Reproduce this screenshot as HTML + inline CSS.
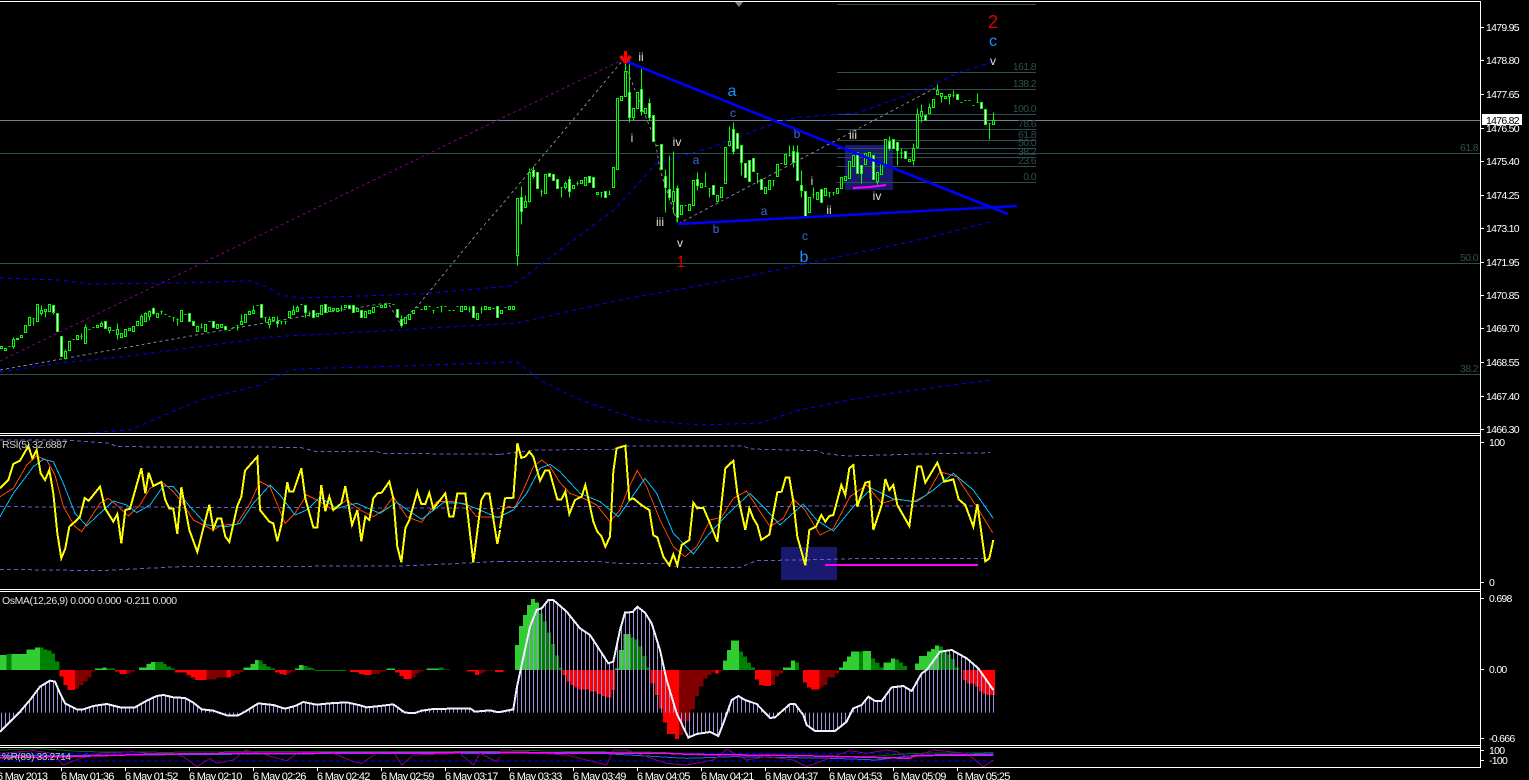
<!DOCTYPE html>
<html><head><meta charset="utf-8"><title>Chart</title>
<style>
html,body{margin:0;padding:0;background:#000;width:1529px;height:780px;overflow:hidden}
svg{display:block;font-family:"Liberation Sans",sans-serif}
.p{font-size:10.5px;fill:#fff;letter-spacing:-.72px}
.t{font-size:11px;fill:#fff;letter-spacing:-.72px}
.f{font-size:10.5px;fill:#2f4f4f;letter-spacing:-.6px;text-anchor:end}
.r{font-size:12px;fill:#eadfcf;text-anchor:middle}
.s{font-size:12px;fill:#3f66d8;text-anchor:middle}
.l{font-size:16px;fill:#1e90ff;text-anchor:middle}
.n{fill:none}
.c polyline{shape-rendering:crispEdges}
</style></head><body>
<svg width="1529" height="780" viewBox="0 0 1529 780" xmlns="http://www.w3.org/2000/svg">
<defs><pattern id="bars" patternUnits="userSpaceOnUse" width="12" height="10"><rect x="3" y="0" width="3" height="10" fill="#a090dc"/></pattern></defs>
<rect width="1529" height="780" fill="#000"/>

<!-- blue boxes -->
<rect x="845" y="145" width="48" height="45" fill="#191970"/>
<rect x="781" y="547" width="56" height="33" fill="#191970"/>

<!-- levels -->
<g stroke="#2f4f4f" shape-rendering="crispEdges">
<path d="M0 153.5H1480M0 263.5H1480M0 374.5H1480"/>
<path d="M837 4.5H1036M837 72.5H1036M837 89.5H1036M837 114.5H1036M837 129.5H1036M837 140.5H1036M837 148.5H1036M837 157.5H1036M837 166.5H1036M837 182.5H1036"/>
</g>
<path d="M0 120.5H1480" stroke="#708090" shape-rendering="crispEdges"/>

<!-- dotted MAs / zigzags -->
<g fill="none" stroke-width="1" shape-rendering="crispEdges">
<path stroke="#800080" stroke-dasharray="3 3" d="M0 361L622 60"/>
<path stroke="#808090" stroke-dasharray="3 3" d="M0 370L67 358L213 332L293 318L367 306L388 303L400 323L420 303L480 230L500 207L623 60L655 140L660 170L678 224L937 87"/>
<g stroke="#0000ff" stroke-dasharray="4 4">
<path d="M0 278L60 280L90 284L180 283L250 281L270 288L280 295L300 298L420 294L510 286L523 278L615 209L657 163L710 148L777 122L800 117L857 113L927 88L960 72L993 62"/>
<path d="M0 372L60 363L130 356L270 337L400 330L517 323L620 300L735 279L800 265L923 239L990 222"/>
<path d="M88 433L130 430L200 400L260 385L290 370L300 369L400 366L517 362L540 380L580 400L640 420L700 425L760 423L800 410L850 400L900 392L990 380"/>
</g>
</g>

<!-- candles -->
<g transform="translate(.5,.5)" shape-rendering="crispEdges" stroke="#00ff00" stroke-width="1">
<path fill="none" d="M13 337V348M29 316V325M33 318V325M41 305V315M45 309V317M53 305V314M65 349V359M81 333V339M85 324V343M101 321V326M109 327V333M117 323V339M141 314V325M145 312V321M149 310V320M153 307V314M161 310V314M173 317V321M177 318V325M201 323V328M237 325V330M241 314V324M249 310V314M253 305V313M261 304V317M265 317V322M269 316V328M277 316V327M281 321V324M285 321V324M293 305V314M297 305V311M305 305V317M309 311V316M341 305V311M401 315V327M433 310V313M441 306V312M461 306V311M469 306V312M481 306V313
M517 198V265M521 186V224M525 195V207M529 168V202M533 166V178M541 189V196M561 187V197M565 181V189M569 176V197M577 181V185M601 192V197M609 190V194M625 60V96M629 60V122M633 108V120M641 67V115M649 98V120M665 169V212M669 155V200M673 151V213M677 185V222M697 172V190M705 172V186M709 188V197M729 126V146M733 122V154M741 145V175M757 173V183M773 180V186M789 145V156M793 145V167M797 145V180M801 170V197M813 187V198M829 192V197M833 192V195M861 165V183M877 172V184M889 136V150M897 142V165M901 148V158M913 143V165M917 108V148M921 104V122M929 103V113M937 84V94M941 93V102M949 94V104M953 90V97M977 93V102M989 123V139M993 112V124
M0 346h2M8 346h2M32 318h2M72 339h2M80 336h2M88 329h2M92 327h2M112 330h2M160 311h2M164 314h2M168 316h2M172 317h2M176 319h2M184 314h2M200 327h2M208 321h2M228 330h2M232 327h2M236 325h2M256 305h2M264 317h2M280 321h2M284 321h2M300 304h2M308 313h2M340 308h2M376 306h2M388 303h2M392 304h2M416 307h2M420 309h2M428 306h2M432 310h2M436 307h2M440 306h2M444 306h2M448 310h2M452 310h2M456 306h2M468 309h2M480 309h2M492 308h2M504 307h2
M540 191h2M560 187h2M576 183h2M600 192h2M608 194h2M656 145h2M684 205h2M704 186h2M708 188h2M756 173h2M772 180h2M780 163h2M788 155h2M812 194h2M828 192h2M832 192h2M900 152h2M952 95h2M960 102h2M964 100h2M968 100h2M972 105h2M976 102h2M988 123h2"/>
<path fill="#000" d="M0 346h2v2h-2zM4 348h2v2h-2zM12 339h2v7h-2zM16 338h2v1h-2zM20 335h2v2h-2zM24 325h2v7h-2zM28 317h2v8h-2zM36 304h2v17h-2zM40 310h2v3h-2zM44 309h2v2h-2zM48 304h2v7h-2zM64 351h2v7h-2zM68 341h2v9h-2zM76 335h2v4h-2zM84 327h2v16h-2zM96 325h2v2h-2zM100 323h2v3h-2zM108 327h2v3h-2zM116 329h2v5h-2zM120 333h2v4h-2zM124 329h2v7h-2zM128 328h2v2h-2zM132 326h2v5h-2zM136 321h2v4h-2zM140 316h2v9h-2zM144 313h2v8h-2zM148 311h2v5h-2zM156 313h2v4h-2zM180 310h2v11h-2zM196 326h2v5h-2zM204 324h2v7h-2zM216 324h2v4h-2zM220 324h2v3h-2zM240 321h2v3h-2zM244 314h2v8h-2zM248 311h2v3h-2zM252 310h2v3h-2zM268 319h2v5h-2zM272 317h2v3h-2zM288 311h2v6h-2zM292 310h2v4h-2zM296 307h2v4h-2zM316 313h2v3h-2zM320 305h2v9h-2zM328 307h2v4h-2zM332 308h2v2h-2zM336 308h2v3h-2zM344 305h2v2h-2zM356 308h2v3h-2zM364 311h2v6h-2zM368 310h2v3h-2zM372 307h2v5h-2zM380 305h2v2h-2zM384 304h2v3h-2zM404 317h2v6h-2zM408 314h2v5h-2zM412 310h2v3h-2zM424 306h2v3h-2zM460 306h2v5h-2zM464 306h2v3h-2zM476 313h2v6h-2zM484 306h2v3h-2zM488 307h2v2h-2zM500 310h2v3h-2zM508 306h2v3h-2zM512 306h2v3h-2z
M516 198h2v57h-2zM524 201h2v6h-2zM528 172h2v29h-2zM544 174h2v19h-2zM564 183h2v4h-2zM572 185h2v3h-2zM580 180h2v3h-2zM584 177h2v8h-2zM596 192h2v2h-2zM612 167h2v20h-2zM616 98h2v71h-2zM620 96h2v4h-2zM624 71h2v25h-2zM632 108h2v9h-2zM636 92h2v16h-2zM644 108h2v5h-2zM672 191h2v10h-2zM680 205h2v9h-2zM688 204h2v6h-2zM692 180h2v25h-2zM700 183h2v4h-2zM716 195h2v6h-2zM720 187h2v10h-2zM724 147h2v36h-2zM728 141h2v4h-2zM764 187h2v6h-2zM768 180h2v9h-2zM776 164h2v12h-2zM784 154h2v10h-2zM808 197h2v15h-2zM816 192h2v7h-2zM824 188h2v7h-2zM836 188h2v5h-2zM840 177h2v11h-2zM844 176h2v4h-2zM848 161h2v17h-2zM852 155h2v11h-2zM864 153h2v11h-2zM868 152h2v5h-2zM876 172h2v9h-2zM880 164h2v10h-2zM884 139h2v25h-2zM908 159h2v2h-2zM912 148h2v12h-2zM916 114h2v33h-2zM920 111h2v5h-2zM928 107h2v6h-2zM932 99h2v8h-2zM936 90h2v4h-2zM940 93h2v3h-2zM944 96h2v2h-2zM948 94h2v2h-2zM992 120h2v4h-2z"/>
<path fill="#fff" d="M52 305h2v7h-2zM56 313h2v18h-2zM60 336h2v20h-2zM104 321h2v7h-2zM152 308h2v5h-2zM188 313h2v8h-2zM192 321h2v4h-2zM212 321h2v6h-2zM224 326h2v3h-2zM260 304h2v13h-2zM276 321h2v2h-2zM304 305h2v7h-2zM312 310h2v7h-2zM324 304h2v8h-2zM348 305h2v3h-2zM352 305h2v7h-2zM360 310h2v7h-2zM396 309h2v8h-2zM400 319h2v6h-2zM472 306h2v11h-2zM496 306h2v11h-2z
M520 197h2v14h-2zM532 170h2v6h-2zM536 172h2v16h-2zM548 173h2v3h-2zM552 174h2v6h-2zM556 179h2v9h-2zM568 179h2v12h-2zM588 176h2v6h-2zM592 177h2v10h-2zM604 191h2v6h-2zM628 92h2v25h-2zM640 89h2v22h-2zM648 103h2v14h-2zM652 115h2v26h-2zM660 144h2v25h-2zM664 176h2v11h-2zM668 189h2v8h-2zM676 188h2v29h-2zM696 179h2v6h-2zM712 185h2v9h-2zM732 129h2v22h-2zM736 133h2v15h-2zM740 145h2v17h-2zM744 163h2v14h-2zM748 160h2v21h-2zM752 158h2v13h-2zM760 179h2v10h-2zM792 151h2v11h-2zM796 152h2v28h-2zM800 185h2v5h-2zM804 191h2v26h-2zM820 189h2v13h-2zM856 152h2v21h-2zM860 165h2v8h-2zM872 155h2v24h-2zM888 141h2v7h-2zM892 139h2v9h-2zM896 142h2v8h-2zM904 151h2v7h-2zM924 115h2v5h-2zM956 94h2v5h-2zM980 102h2v6h-2zM984 109h2v15h-2z"/>
</g>

<!-- trend lines -->
<path d="M625 61L1008 214" stroke="#0000ff" stroke-width="2.6" fill="none"/>
<path d="M678 224L1017 206" stroke="#0000ff" stroke-width="2.4" fill="none"/>
<path d="M853 188L870 187L886 185" stroke="#ff00ff" stroke-width="2" fill="none"/>

<!-- arrow & top marker -->
<path d="M624 51h3v7l2-3 3 2-6 7h-1l-6-7 3-2 2 3z" fill="#ff0000"/>
<path d="M734 1h10l-5 6z" fill="#808080"/>

<!-- wave labels -->
<text class="r" x="641" y="61">ii</text><text class="r" x="632" y="142">i</text>
<text class="r" x="677" y="146">iv</text><text class="r" x="660" y="226">iii</text>
<text class="r" x="680" y="247">v</text><text class="r" x="812" y="185">i</text>
<text class="r" x="829" y="214">ii</text><text class="r" x="853" y="139">iii</text>
<text class="r" x="877" y="200">iv</text><text class="r" x="993" y="65">v</text>
<text class="s" x="733" y="117">c</text><text class="s" x="797" y="138">b</text>
<text class="s" x="696" y="164">a</text><text class="s" x="764" y="215">a</text>
<text class="s" x="716" y="233">b</text><text class="s" x="805" y="240">c</text>
<text class="l" x="732" y="96">a</text><text class="l" x="804" y="262">b</text>
<text class="l" x="993" y="46">c</text>
<text x="681" y="267" font-size="16" fill="#e00000" text-anchor="middle">1</text>
<text x="993" y="28" font-size="18" fill="#e00000" text-anchor="middle">2</text>

<!-- fib labels -->
<text class="f" x="1036" y="70">161.8</text><text class="f" x="1036" y="87">138.2</text>
<text class="f" x="1036" y="112">100.0</text><text class="f" x="1036" y="127">78.6</text>
<text class="f" x="1036" y="138">61.8</text><text class="f" x="1036" y="146">50.0</text>
<text class="f" x="1036" y="155">38.2</text><text class="f" x="1036" y="164">23.6</text>
<text class="f" x="1036" y="180">0.0</text>
<text class="f" x="1478" y="151">61.8</text><text class="f" x="1478" y="261">50.0</text><text class="f" x="1478" y="372">38.2</text>

<!-- RSI -->
<g class="c" fill="none" transform="translate(0,430) scale(.33333)">
<g stroke="#6a5acd" stroke-width="3" stroke-dasharray="12 9" shape-rendering="crispEdges">
<path d="M0 30L200 30L330 40L350 50L900 52L950 65L1130 65L1150 70L1500 73"/><path d="M0 230L1500 235"/><path d="M0 418L300 422L540 410L1200 408L1340 402L1500 394"/>
</g>
<polyline stroke="#ff4500" stroke-width="3" points="0,200 40,175 80,105 110,78 140,90 165,135 190,230 225,290 245,305 270,265 300,220 325,205 350,225 385,258 420,225 450,175 485,155 520,185 545,215 580,270 640,300 665,285 710,283 750,220 780,155 810,170 855,280 885,250 920,195 960,215 1000,240 1040,210 1080,240 1120,260 1150,240 1180,200 1220,260 1265,277 1310,215 1360,215 1400,225 1430,260 1500,262"/>
<polyline stroke="#00bfff" stroke-width="3" points="0,260 40,190 100,110 130,88 160,95 190,160 225,250 260,287 300,250 340,213 380,225 410,248 450,225 490,168 520,170 570,230 620,285 680,290 720,280 760,220 810,165 840,195 885,255 920,240 960,202 1010,235 1070,220 1140,250 1190,217 1230,245 1265,268 1330,218 1390,220 1440,240 1490,262 1500,260"/>
<polyline stroke="#ffff00" stroke-width="6" points="0,175 25,150 40,102 60,92 85,48 97,85 110,60 122,130 135,150 148,120 160,190 172,310 184,385 196,355 208,290 225,275 240,260 254,204 266,212 280,195 300,170 315,235 340,275 352,252 364,340 376,240 390,236 424,115 436,190 446,128 460,168 484,156 496,210 508,236 520,236 532,312 544,172 568,300 592,366 628,224 640,296 652,266 664,266 676,320 688,336 712,228 724,200 735,122 772,80 780,240 808,275 820,280 832,334 844,285 862,156 868,185 880,185 904,115 916,205 940,292 952,292 964,165 976,244 988,200 1000,240 1024,220 1036,168 1056,285 1072,240 1084,334 1096,260 1108,270 1120,205 1132,190 1145,188 1168,155 1180,205 1192,350 1204,397 1216,295 1228,270 1252,185 1264,222 1276,222 1288,188 1300,236 1336,190 1348,260 1360,260 1372,190 1396,190 1420,397 1444,210 1456,190 1468,190 1492,342 1500,300"/>
</g>
<g class="c" fill="none" transform="translate(500,430) scale(.33333)">
<g stroke="#6a5acd" stroke-width="3" stroke-dasharray="12 9" shape-rendering="crispEdges">
<path d="M0 73L110 60L340 58L380 48L730 48L750 57L950 62L970 70L1040 78L1260 72L1470 68"/><path d="M0 230L1470 228"/><path d="M0 394L300 395L350 400L490 400L510 408L560 413L720 412L770 392L1000 388L1090 385L1470 385"/>
</g>
<polyline stroke="#ff4500" stroke-width="3" points="0,250 20,232 45,232 70,180 100,110 125,90 150,110 180,158 210,190 250,205 290,225 330,275 360,240 385,175 412,122 440,170 480,270 520,350 555,380 590,350 630,270 665,262 700,205 740,183 770,230 810,290 850,265 880,207 915,240 960,315 1000,295 1050,200 1100,165 1145,220 1190,207 1240,215 1280,195 1320,125 1370,140 1430,230 1478,308"/>
<polyline stroke="#00bfff" stroke-width="3" points="0,260 40,240 80,190 120,115 150,103 180,125 240,190 300,215 355,260 400,195 435,145 470,190 520,310 580,372 620,320 680,255 750,190 790,230 840,285 910,222 950,270 1000,303 1060,230 1115,175 1180,207 1250,215 1300,180 1360,130 1420,180 1480,265"/>
<polyline stroke="#ffff00" stroke-width="6" points="0,295 15,205 40,203 52,40 64,84 76,80 88,65 100,80 120,152 135,122 148,122 172,208 184,208 196,185 208,252 225,210 245,200 256,165 280,275 292,305 304,318 316,350 330,320 340,125 350,55 376,47 388,210 400,205 424,225 448,240 460,316 472,322 490,380 508,406 520,373 532,406 545,345 568,330 580,218 592,235 610,233 628,275 652,335 676,115 700,92 712,190 736,300 748,235 760,265 772,285 784,330 808,314 832,187 845,185 857,143 868,143 880,215 892,320 916,406 928,300 948,290 964,255 976,275 988,258 1000,255 1024,165 1036,195 1048,115 1060,105 1072,230 1096,158 1108,155 1120,300 1145,225 1156,147 1168,180 1180,165 1192,225 1228,288 1252,110 1264,110 1276,158 1312,98 1333,155 1360,148 1376,208 1396,225 1420,290 1432,222 1456,394 1468,385 1480,330"/>
</g>
<path d="M825 565H978" stroke="#ff00ff" stroke-width="2" shape-rendering="crispEdges"/>
<text x="2" y="448" font-size="10.5" fill="#d0d0d0" letter-spacing="-.45">RSI(5) 32.6887</text>

<!-- OsMA left -->
<g class="c" transform="translate(0,590) scale(.33333)">
<g shape-rendering="crispEdges">
<path fill="#32cd32" d="M0 240V195H20V240ZM34 240V192H80V178H105V172H120V240ZM285 240V236H308V232H320V240ZM417 240V232H440V222H453V216H465V240ZM730 240V232H752V222H765V210H775V240ZM885 240V235H897V225H910V240ZM1160 240V235H1185V240ZM1280 240V235H1315V240Z"/>
<path fill="#008000" d="M20 240V192H34V240ZM120 240V172H130V178H143V182H155V190H165V215H178V240ZM320 240V235H345V240ZM465 240V216H490V222H500V230H513V236H525V240ZM775 240V212H788V222H800V230H812V236H825V240ZM910 240V228H922V232H935V236H945V240ZM945 240H1040V243H945ZM1315 240V233H1330V238H1350V240Z"/>
<path fill="#ff0000" d="M178 240H225V300H202V285H190V260H178ZM345 240H380V252H358V245H345ZM525 240H620V270H585V262H572V255H560V248H525ZM680 240H693V262H680ZM825 240H860V255H850V252H838V247H825ZM1050 240H1115V255H1090V252H1075V246H1050ZM1185 240H1235V267H1210V258H1198V247H1185ZM1400 240H1437V255H1425V244H1400ZM1485 240H1510V246H1485Z"/>
<path fill="#800000" d="M225 240H285V245H274V262H262V275H250V285H237V295H225ZM380 240H405V244H393V250H380ZM620 240H680V262H650V268H620ZM693 240H730V246H718V252H705V258H693ZM860 240H885V244H873V250H860ZM1115 240H1160V245H1140V252H1115ZM1235 240H1270V245H1258V250H1246V262H1235ZM1437 240H1480V242H1460V245H1450V250H1437Z"/>
</g>
<path fill="url(#bars)" d="M0 425L30 395L60 365L90 330L120 290L150 272L165 275L180 310L195 340L230 358L250 358L280 348L320 342L360 352L405 352L440 332L470 318L490 315L520 322L555 324L580 338L605 358L640 362L680 376L715 376L740 362L775 340L820 345L855 356L885 348L910 336L950 344L990 340L1040 337L1080 346L1100 352L1140 348L1180 343L1215 368L1245 369L1265 362L1300 357L1410 355L1425 365L1470 361L1490 366L1500 366L1500 368L0 368Z"/>
<polyline fill="none" stroke="#f0f0ff" stroke-width="6" points="0,425 30,395 60,365 90,330 120,290 150,272 165,275 180,310 195,340 230,358 250,358 280,348 320,342 360,352 405,352 440,332 470,318 490,315 520,322 555,324 580,338 605,358 640,362 680,376 715,376 740,362 775,340 820,345 855,356 885,348 910,336 950,344 990,340 1040,337 1080,346 1100,352 1140,348 1180,343 1215,368 1245,369 1265,362 1300,357 1410,355 1425,365 1470,361 1490,366 1500,366"/>
<!-- bottom indicator left -->
<g fill="none" stroke-width="3">
<path stroke="#0000ff" stroke-dasharray="12 9" d="M0 490H1500M0 513H1500"/>
<polyline stroke="#006400" points="0,480 120,476 180,480 250,485 500,487 700,485 1200,485 1500,485"/>
<polyline stroke="#1e60ff" points="0,497 400,495 800,492 1200,490 1500,490"/>
<polyline stroke="#800080" points="0,490 100,482 160,490 190,525 240,505 300,490 400,485 440,490 520,490 550,500 590,530 630,505 650,520 700,510 735,480 780,490 860,512 900,485 1000,490 1060,515 1085,520 1130,490 1180,485 1205,525 1240,495 1380,490 1420,525 1440,490 1490,515 1500,500"/>
<polyline stroke="#ff00ff" stroke-width="4.5" points="0,503 200,500 450,493 700,490 1500,487"/>
</g>
</g>

<!-- OsMA right -->
<g class="c" transform="translate(500,590) scale(.33333)">
<g shape-rendering="crispEdges">
<path fill="#32cd32" d="M45 240V165H57V108H69V75H81V45H93V27H105V38H117V240ZM345 240V235H357V180H370V132H392V240ZM669 240V212H681V180H693V152H717V240ZM849 240V232H873V212H885V240ZM1017 240V232H1029V215H1041V200H1053V185H1077V240ZM1089 240V183H1113V240ZM1150 240V218H1173V205H1185V240ZM1245 240V220H1257V198H1281V185H1293V177H1305V167H1317V240Z"/>
<path fill="#008000" d="M117 240V70H129V95H141V127H153V162H165V197H177V232H188V240ZM392 240V142H404V148H416V170H428V198H440V232H452V240ZM717 240V185H729V200H741V218H753V232H765V240ZM885 240V218H897V240ZM1077 240V185H1089V240ZM1113 240V205H1125V218H1138V232H1150V240ZM1185 240V208H1197V218H1209V228H1221V240ZM1317 240V170H1329V185H1341V193H1353V207H1365V232H1377V240Z"/>
<path fill="#ff0000" d="M188 240H345V300H335V322H320V318H305V312H290V305H270V298H235V292H223V285H212V275H200V255H188ZM452 240H537V447H525V432H501V398H489V355H477V315H465V280H452ZM645 240H657V250H645ZM765 240H813V288H789V285H777V268H765V240ZM909 240H958V298H933V292H921V278H909ZM1389 240H1485V315H1461V312H1449V305H1437V290H1425V280H1401V270H1389Z"/>
<path fill="#800000" d="M537 240H645V248H634V255H622V265H610V290H597V318H585V358H572V395H550V435H537ZM657 240H669V243H657ZM813 240H849V250H837V260H825V285H813ZM958 240H1017V250H1005V262H982V285H970V292H958Z"/>
</g>
<path fill="url(#bars)" d="M0 366L40 358L50 295L65 225L90 110L110 60L125 55L145 30L160 30L200 65L240 115L270 135L325 220L340 215L360 120L375 68L398 66L412 50L435 68L455 100L480 180L500 270L530 370L565 443L590 432L630 426L655 438L670 400L695 330L715 318L735 330L770 342L810 384L825 382L870 342L885 342L910 375L920 405L945 423L1005 423L1040 395L1060 355L1085 345L1105 320L1125 333L1145 333L1175 292L1210 288L1235 303L1265 250L1280 240L1320 185L1355 180L1400 205L1435 235L1485 300L1485 368L0 368Z"/>
<polyline fill="none" stroke="#f0f0ff" stroke-width="6" points="0,366 40,358 50,295 65,225 90,110 110,60 125,55 145,30 160,30 200,65 240,115 270,135 325,220 340,215 360,120 375,68 398,66 412,50 435,68 455,100 480,180 500,270 530,370 565,443 590,432 630,426 655,438 670,400 695,330 715,318 735,330 770,342 810,384 825,382 870,342 885,342 910,375 920,405 945,423 1005,423 1040,395 1060,355 1085,345 1105,320 1125,333 1145,333 1175,292 1210,288 1235,303 1265,250 1280,240 1320,185 1355,180 1400,205 1435,235 1480,300"/>
<!-- bottom indicator right -->
<g fill="none" stroke-width="3">
<path stroke="#0000ff" stroke-dasharray="12 9" d="M0 490H1480M0 513H1480"/>
<polyline stroke="#006400" points="0,480 200,484 480,487 600,495 900,497 1100,500 1240,490 1480,488"/>
<polyline stroke="#1e60ff" points="0,490 300,490 560,505 700,500 1000,505 1130,510 1250,495 1480,492"/>
<polyline stroke="#800080" points="0,490 120,490 200,495 320,525 340,480 380,480 410,490 500,520 560,525 640,510 680,478 740,510 800,500 880,510 920,530 1000,500 1050,482 1100,490 1160,480 1190,485 1230,505 1300,480 1400,490 1450,530 1480,510"/>
<polyline stroke="#ff00ff" stroke-width="4.5" points="0,487 500,490 570,493 900,497 1230,505 1240,497 1480,495"/>
</g>
</g>
<text x="2" y="604" font-size="10.5" fill="#e0e0e0" letter-spacing="-.42">OsMA(12,26,9) 0.000 0.000 -0.211 0.000</text>
<text x="2" y="760" font-size="10" fill="#c8c8c8" letter-spacing="-.3">%R(89)  33.2714</text>

<!-- frame -->
<g stroke="#fff" shape-rendering="crispEdges" fill="none">
<path d="M0 1.5H1480.5V767.5H0M0 433.5H1480M0 435.5H1480M0 589.5H1480M0 591.5H1480M0 745.5H1480M0 747.5H1480"/>
<path d="M1481 27.5h3M1481 60.5h3M1481 94.5h3M1481 128.5h3M1481 161.5h3M1481 195.5h3M1481 228.5h3M1481 262.5h3M1481 295.5h3M1481 328.5h3M1481 362.5h3M1481 396.5h3M1481 429.5h3M1481 442.5h3M1481 582.5h3M1481 598.5h3M1481 669.5h3M1481 738.5h3M1481 750.5h3M1481 760.5h3"/>
<path d="M61.5 768v3M125.5 768v3M189.5 768v3M253.5 768v3M317.5 768v3M381.5 768v3M445.5 768v3M509.5 768v3M573.5 768v3M637.5 768v3M701.5 768v3M765.5 768v3M829.5 768v3M893.5 768v3M957.5 768v3"/>
</g>

<!-- price axis -->
<text class="p" x="1486" y="31">1479.95</text><text class="p" x="1486" y="64">1478.80</text>
<text class="p" x="1486" y="98">1477.65</text><text class="p" x="1486" y="132">1476.50</text>
<text class="p" x="1486" y="165">1475.40</text><text class="p" x="1486" y="199">1474.25</text>
<text class="p" x="1486" y="232">1473.10</text><text class="p" x="1486" y="266">1471.95</text>
<text class="p" x="1486" y="299">1470.85</text><text class="p" x="1486" y="332">1469.70</text>
<text class="p" x="1486" y="366">1468.55</text><text class="p" x="1486" y="400">1467.40</text>
<text class="p" x="1486" y="433">1466.30</text>
<rect x="1482" y="114" width="40" height="11" fill="#fff"/>
<text class="p" x="1486" y="124" style="fill:#000">1476.82</text>
<text class="p" x="1489" y="446">100</text><text class="p" x="1489" y="586">0</text>
<text class="p" x="1489" y="602">0.698</text><text class="p" x="1489" y="673">0.00</text>
<text class="p" x="1489" y="742">-0.666</text><text class="p" x="1489" y="754">100</text>
<text class="p" x="1489" y="764">-100</text>

<!-- time axis -->
<text class="t" x="-3" y="780">6 May 2013</text><text class="t" x="61" y="780">6 May 01:36</text>
<text class="t" x="125" y="780">6 May 01:52</text><text class="t" x="189" y="780">6 May 02:10</text>
<text class="t" x="253" y="780">6 May 02:26</text><text class="t" x="317" y="780">6 May 02:42</text>
<text class="t" x="381" y="780">6 May 02:59</text><text class="t" x="445" y="780">6 May 03:17</text>
<text class="t" x="509" y="780">6 May 03:33</text><text class="t" x="573" y="780">6 May 03:49</text>
<text class="t" x="637" y="780">6 May 04:05</text><text class="t" x="701" y="780">6 May 04:21</text>
<text class="t" x="765" y="780">6 May 04:37</text><text class="t" x="829" y="780">6 May 04:53</text>
<text class="t" x="893" y="780">6 May 05:09</text><text class="t" x="957" y="780">6 May 05:25</text>
</svg>
</body></html>
